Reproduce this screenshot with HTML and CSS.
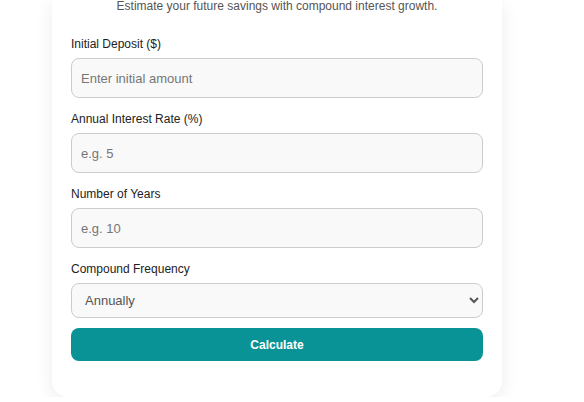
FILE: index.html
```html
<!DOCTYPE html>
<html lang="en">
<head>
  <meta charset="UTF-8">
  <meta name="viewport" content="width=device-width, initial-scale=1.0">
  <title>Savings Calculator</title>
  <link rel="stylesheet" href="styles.css">
</head>
<body>

  <!-- Calculator Card -->
  <div class="card">
    <p class="subtitle">Estimate your future savings with compound interest growth.</p>

    <div class="form-group">
      <label for="deposit">Initial Deposit ($)</label>
      <input type="number" id="deposit" placeholder="Enter initial amount">
    </div>

    <div class="form-group">
      <label for="rate">Annual Interest Rate (%)</label>
      <input type="number" id="rate" placeholder="e.g. 5">
    </div>

    <div class="form-group">
      <label for="years">Number of Years</label>
      <input type="number" id="years" placeholder="e.g. 10">
    </div>

    <div class="form-group">
      <label for="frequency">Compound Frequency</label>
      <select id="frequency">
        <option value="1">Annually</option>
        <option value="2">Semi-Annually</option>
        <option value="4">Quarterly</option>
        <option value="12">Monthly</option>
      </select>
    </div>

    <button class="calc-btn">Calculate</button>
  </div>

</body>
</html>
```

FILE: styles.css
```css
body {
  font-family: "Liberation Sans", Arial, sans-serif;
  background-color: #fff;
  color: #222;
  margin: 0;
  padding: 0;
}
/* Card */
.card {
  width: 450px;
  box-sizing: border-box;
  margin-left: 52px;
  padding: 0 19px 36px;
  background-color: #fff;
  border-radius: 0 0 16px 16px;
  box-shadow: 0 4px 18px rgba(0, 0, 0, 0.08);
}
.subtitle {
  font-size: 12px;
  line-height: 12px;
  color: #555;
  text-align: center;
  margin: 0 0 25px;
}
/* Form */
.form-group {
  margin-bottom: 14px;
}
.form-group label {
  display: block;
  font-size: 12px;
  line-height: 14px;
  color: #222;
  margin-bottom: 7px;
}
.form-group input,
.form-group select {
  display: block;
  width: 100%;
  box-sizing: border-box;
  height: 40px;
  padding: 0 9px;
  font-family: inherit;
  font-size: 13px;
  color: #333;
  background-color: #f9f9f9;
  border: 1px solid #ccc;
  border-radius: 8px;
  outline: none;
}
.form-group input::placeholder {
  color: #767676;
}
.form-group select {
  height: 35px;
  color: #555;
}
.form-group:last-of-type {
  margin-bottom: 0;
}
.calc-btn {
  display: block;
  width: 100%;
  height: 33px;
  margin-top: 10px;
  font-family: inherit;
  font-size: 12px;
  font-weight: bold;
  color: #fff;
  background-color: #0a9396;
  border: none;
  border-radius: 8px;
  cursor: pointer;
}
```
